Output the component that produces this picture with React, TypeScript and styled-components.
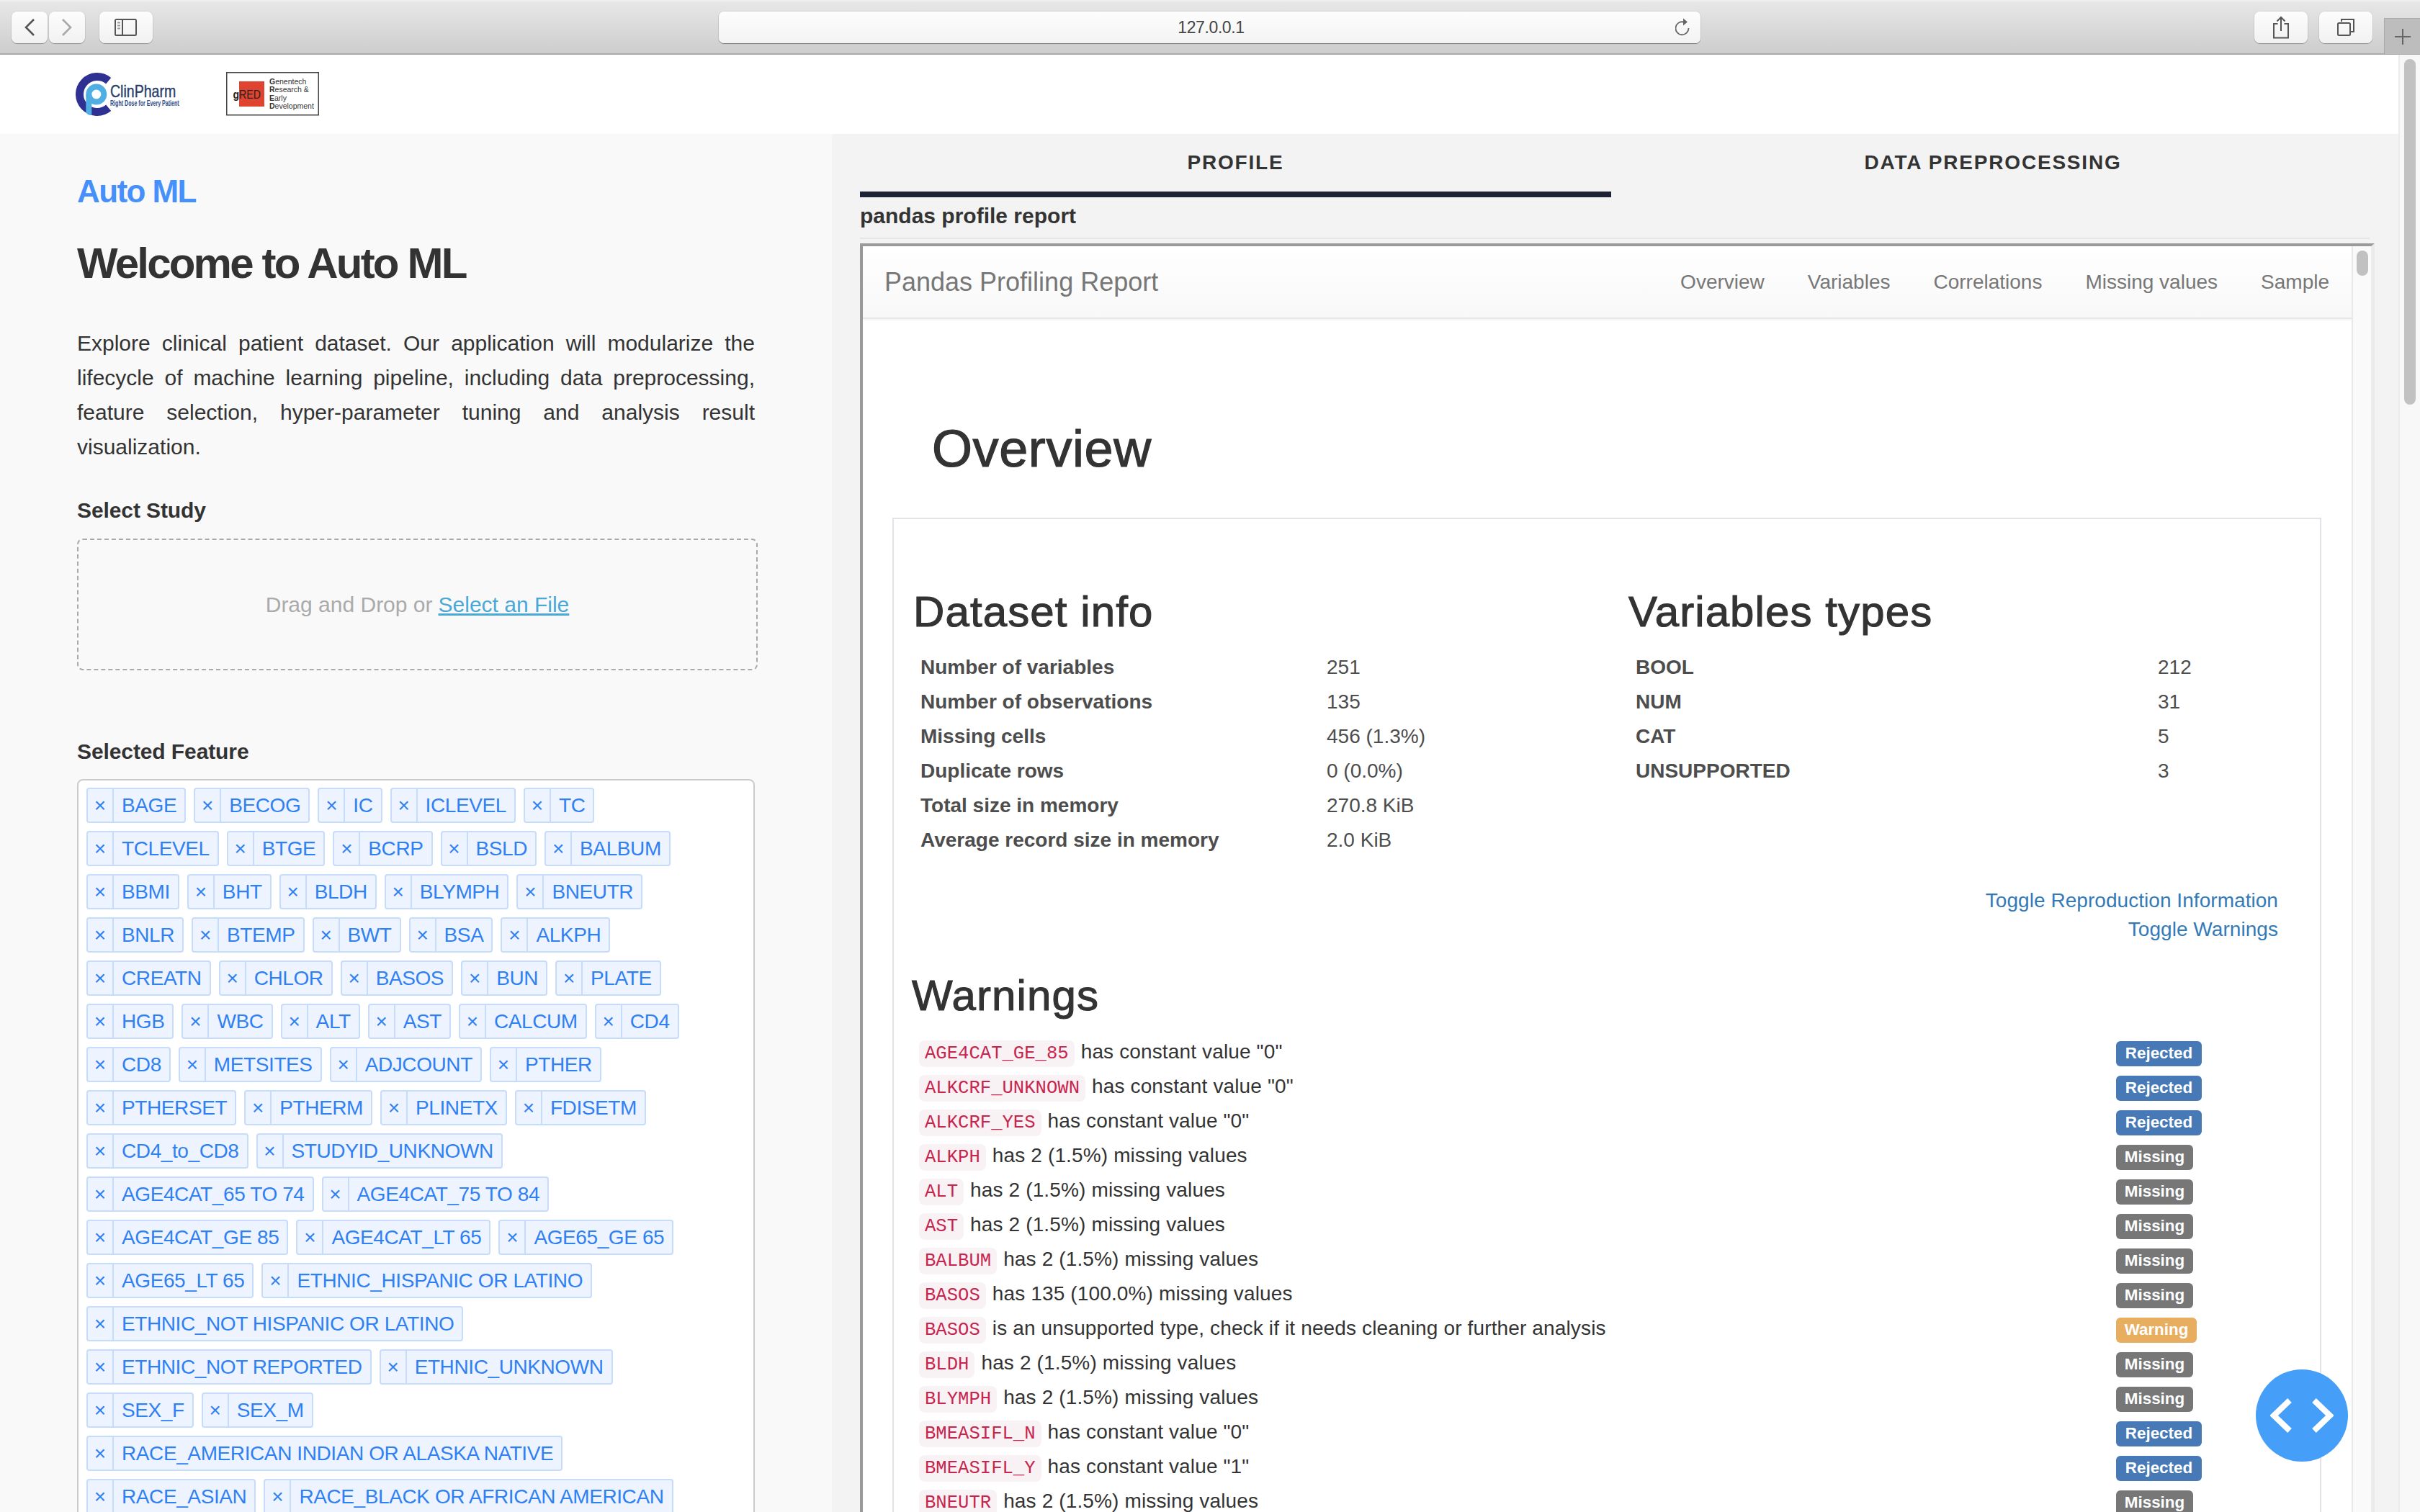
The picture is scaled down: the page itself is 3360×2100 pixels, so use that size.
import React from 'react';
import styled, { createGlobalStyle } from 'styled-components';

const GlobalStyle = createGlobalStyle`
  html, body {
    margin: 0;
    padding: 0;
    width: 3360px;
    height: 2100px;
    overflow: hidden;
    background: #fff;
    font-family: "Liberation Sans", Arial, sans-serif;
    color: #333;
  }
  * { box-sizing: border-box; }
`;

const Page = styled.div`
  position: relative;
  width: 3360px;
  height: 2100px;
  display: flex;
  flex-direction: column;
  overflow: hidden;
`;

/* browser chrome */
const Toolbar = styled.div`
  height: 76px;
  flex: none;
  display: flex;
  align-items: flex-start;
  padding: 14px 0 0 16px;
  background: linear-gradient(#e7e7e7, #cdcdcd);
  border-top: 2px solid #efefef;
  border-bottom: 2px solid #a9a9a9;
`;

const ChromeButton = styled.div<{ $w: number; $ml?: number }>`
  width: ${p => p.$w}px;
  height: 44px;
  flex: none;
  margin-left: ${p => p.$ml ?? 0}px;
  display: flex;
  align-items: center;
  justify-content: center;
  border-radius: 8px;
  background: linear-gradient(#fdfdfd, #f1f1f1);
  box-shadow: 0 1px 1px rgba(0, 0, 0, 0.28), 0 0 0 1px rgba(0, 0, 0, 0.05);
`;

const UrlBar = styled.div`
  width: 1363px;
  height: 44px;
  flex: none;
  margin-left: 786px;
  padding-left: 4px;
  position: relative;
  display: flex;
  align-items: center;
  justify-content: center;
  border-radius: 7px;
  font-size: 23px;
  letter-spacing: -0.4px;
  color: #444;
  background: linear-gradient(#fdfdfd, #f3f3f3);
  box-shadow: 0 1px 1px rgba(0, 0, 0, 0.4), 0 0 0 1px rgba(0, 0, 0, 0.05);
`;

const ReloadIcon = styled.svg`
  position: absolute;
  right: 11px;
  top: 8px;
`;

const NewTab = styled.div`
  width: 50px;
  height: 50px;
  flex: none;
  margin: 9px 0 0 16px;
  display: flex;
  align-items: center;
  justify-content: center;
  background: #bdbdbd;
  border-left: 1px solid #a9a9a9;
  border-top: 1px solid #a9a9a9;
`;

/* page */
const Viewport = styled.div`
  flex: 1;
  min-height: 0;
  display: flex;
`;

const Site = styled.div`
  width: 3330px;
  flex: none;
  display: flex;
  flex-direction: column;
`;

const PageScrollbar = styled.div`
  flex: 1;
  background: #f8f8f8;
  border-left: 2px solid #ececec;
  padding: 6px 6px 0 6px;
`;

const ScrollThumb = styled.div<{ $h: number }>`
  width: 16px;
  height: ${p => p.$h}px;
  border-radius: 8px;
  background: #c1c1c1;
`;

const Header = styled.div`
  height: 110px;
  flex: none;
  display: flex;
  align-items: flex-start;
  padding: 24px 0 0 105px;
  background: #fff;
  gap: 63px;
`;

const Panels = styled.div`
  flex: 1;
  min-height: 0;
  display: flex;
`;

const LeftPanel = styled.div`
  width: 1155px;
  flex: none;
  padding: 55px 107px 0 107px;
  background: #f9f9f9;
  overflow: hidden;
`;

const AppName = styled.div`
  font-size: 44px;
  line-height: 50px;
  font-weight: 700;
  letter-spacing: -1.6px;
  color: #4590fb;
`;

const Welcome = styled.h1`
  margin: 40px 0 0;
  font-size: 60px;
  line-height: 70px;
  font-weight: 700;
  letter-spacing: -2.8px;
  color: #333;
`;

const Intro = styled.p`
  margin: 52px 0 0;
  font-size: 30px;
  line-height: 48px;
  text-align: justify;
  color: #333;
`;

const FieldLabel = styled.div<{ $mt: number }>`
  margin-top: ${p => p.$mt}px;
  font-size: 30px;
  line-height: 40px;
  font-weight: 700;
  letter-spacing: -0.1px;
  color: #333;
`;

const DropZone = styled.div`
  margin: 19px -4px 0 0;
  height: 183px;
  display: flex;
  align-items: center;
  justify-content: center;
  border: 2px dashed #aaa;
  border-radius: 8px;
  font-size: 30px;
  color: #aaa;
`;

const FileLink = styled.a`
  margin-left: 8px;
  color: #4aa8d8;
  text-decoration: underline;
`;

const TagBox = styled.div`
  margin-top: 18px;
  height: 1100px;
  padding: 10px 10px 10px 11px;
  display: flex;
  flex-direction: column;
  gap: 11px;
  background: #fff;
  border: 2px solid #ccc;
  border-radius: 8px;
`;

const TagRow = styled.div`
  display: flex;
  gap: 11px;
`;

const Tag = styled.div`
  height: 49px;
  display: flex;
  background: #edf4ff;
  border: 2px solid #c6dcfb;
  border-radius: 4px;
  font-size: 28px;
  line-height: 45px;
  color: #2f80f2;
`;

const TagRemove = styled.span`
  width: 36px;
  text-align: center;
  border-right: 2px solid #c6dcfb;
`;

const TagLabel = styled.span`
  padding: 0 11px;
  letter-spacing: -0.4px;
  white-space: nowrap;
`;

const RightPanel = styled.div`
  flex: 1;
  min-width: 0;
  padding: 0 33px 0 39px;
  background: #f3f3f3;
  overflow: hidden;
`;

const Tabs = styled.div`
  display: flex;
  height: 88px;
`;

const TabItem = styled.div<{ $active?: boolean }>`
  flex: ${p => (p.$active ? '0 0 1043px' : '1')};
  height: 88px;
  text-align: center;
  padding-top: 19px;
  font-size: 28px;
  line-height: 42px;
  font-weight: 700;
  letter-spacing: 1.8px;
  color: #333;
  border-bottom: 8px solid ${p => (p.$active ? '#1e2235' : 'transparent')};
`;

const ReportTitle = styled.div`
  font-size: 30px;
  line-height: 52px;
  font-weight: 700;
  color: #333;
`;

const Rule = styled.div`
  height: 2px;
  margin: 4px 7px 0 0;
  background: #e6e6e6;
`;

const Frame = styled.div`
  margin-top: 6px;
  height: 1800px;
  display: flex;
  background: #fff;
  border-style: solid;
  border-width: 4px 5px 4px 4px;
  border-color: #9a9a9a #ebebeb #ebebeb #9a9a9a;
`;

const FrameBody = styled.div`
  width: 2067px;
  flex: none;
  display: flex;
  flex-direction: column;
`;

const FrameScrollbar = styled.div`
  flex: 1;
  background: #fafafa;
  border-left: 2px solid #e8e8e8;
  padding: 6px 0 0 5px;
`;

const NavBar = styled.div`
  height: 101px;
  flex: none;
  display: flex;
  align-items: center;
  padding: 0 1px 0 30px;
  background: linear-gradient(#fff, #f8f8f8);
  border-bottom: 2px solid #e7e7e7;
  box-shadow: 0 1px 4px rgba(0, 0, 0, 0.06);
  color: #777;
`;

const Brand = styled.div`
  font-size: 36px;
  margin-right: auto;
`;

const NavLink = styled.div`
  padding: 0 30px;
  font-size: 28px;
`;

const PageHeading = styled.h1`
  margin: 128px 0 0 96px;
  font-size: 72px;
  line-height: 104px;
  font-weight: 400;
  letter-spacing: 0.6px;
  -webkit-text-stroke: 1.2px #333;
  color: #333;
`;

const Well = styled.div`
  margin: 44px 0 0 41px;
  width: 1984px;
  height: 1400px;
  padding-top: 96px;
  border: 2px solid #e2e2e8;
  border-bottom: 0;
`;

const InfoColumns = styled.div`
  display: grid;
  grid-template-columns: 993px 1fr;
  padding-left: 27px;
`;

const SectionTitle = styled.h2<{ $ml?: number; $mt?: number }>`
  margin: ${p => p.$mt ?? 0}px 0 0 ${p => p.$ml ?? 0}px;
  font-size: 60px;
  line-height: 66px;
  font-weight: 400;
  letter-spacing: 1.1px;
  -webkit-text-stroke: 1.1px #333;
  color: #333;
`;

const InfoTable = styled.div<{ $label: number }>`
  margin: 20px 0 0 10px;
  display: grid;
  grid-template-columns: ${p => p.$label}px 1fr;
  grid-auto-rows: 48px;
  align-items: center;
  font-size: 28px;
  color: #4d4d4d;
`;

const InfoLabel = styled.div`
  font-weight: 700;
`;

const Toggles = styled.div`
  margin: 40px 58px 0 0;
  text-align: right;
  font-size: 28px;
  line-height: 40px;
  letter-spacing: 0.05px;
  color: #337ab7;
`;

const WarningList = styled.div`
  margin: 23px 0 0 35px;
`;

const WarningRow = styled.div`
  display: grid;
  grid-template-columns: 1662px auto;
  height: 48px;
  align-items: center;
  font-size: 28px;
  letter-spacing: 0.14px;
  color: #333;
`;

const Code = styled.code`
  display: inline-block;
  height: 37px;
  margin-right: 9px;
  padding: 0 8px;
  font-family: "Liberation Mono", monospace;
  font-size: 25.6px;
  line-height: 37px;
  letter-spacing: 0;
  color: #c7254e;
  background: #f9f2f4;
  border-radius: 8px;
`;

const badgeColors = {
  Rejected: { bg: '#4679b5', w: 119 },
  Missing: { bg: '#777777', w: 107 },
  Warning: { bg: '#e8ae60', w: 112 },
};

const Badge = styled.span<{ $kind: keyof typeof badgeColors }>`
  width: ${p => badgeColors[p.$kind].w}px;
  height: 35px;
  display: block;
  text-align: center;
  border-radius: 6px;
  background: ${p => badgeColors[p.$kind].bg};
  color: #fff;
  font-size: 22.4px;
  line-height: 34px;
  font-weight: 700;
  letter-spacing: 0;
`;

const Fab = styled.div`
  position: absolute;
  right: 100px;
  bottom: 70px;
  width: 128px;
  height: 128px;
  display: flex;
  align-items: center;
  justify-content: center;
  border-radius: 50%;
  background: #459ef8;
`;

const tagRows = [
  ['BAGE', 'BECOG', 'IC', 'ICLEVEL', 'TC'],
  ['TCLEVEL', 'BTGE', 'BCRP', 'BSLD', 'BALBUM'],
  ['BBMI', 'BHT', 'BLDH', 'BLYMPH', 'BNEUTR'],
  ['BNLR', 'BTEMP', 'BWT', 'BSA', 'ALKPH'],
  ['CREATN', 'CHLOR', 'BASOS', 'BUN', 'PLATE'],
  ['HGB', 'WBC', 'ALT', 'AST', 'CALCUM', 'CD4'],
  ['CD8', 'METSITES', 'ADJCOUNT', 'PTHER'],
  ['PTHERSET', 'PTHERM', 'PLINETX', 'FDISETM'],
  ['CD4_to_CD8', 'STUDYID_UNKNOWN'],
  ['AGE4CAT_65 TO 74', 'AGE4CAT_75 TO 84'],
  ['AGE4CAT_GE 85', 'AGE4CAT_LT 65', 'AGE65_GE 65'],
  ['AGE65_LT 65', 'ETHNIC_HISPANIC OR LATINO'],
  ['ETHNIC_NOT HISPANIC OR LATINO'],
  ['ETHNIC_NOT REPORTED', 'ETHNIC_UNKNOWN'],
  ['SEX_F', 'SEX_M'],
  ['RACE_AMERICAN INDIAN OR ALASKA NATIVE'],
  ['RACE_ASIAN', 'RACE_BLACK OR AFRICAN AMERICAN'],
];

const datasetInfo = [
  ['Number of variables', '251'],
  ['Number of observations', '135'],
  ['Missing cells', '456 (1.3%)'],
  ['Duplicate rows', '0 (0.0%)'],
  ['Total size in memory', '270.8 KiB'],
  ['Average record size in memory', '2.0 KiB'],
];

const variableTypes = [
  ['BOOL', '212'],
  ['NUM', '31'],
  ['CAT', '5'],
  ['UNSUPPORTED', '3'],
];

const missing2 = 'has 2 (1.5%) missing values';

const warnings: [string, string, keyof typeof badgeColors][] = [
  ['AGE4CAT_GE_85', 'has constant value "0"', 'Rejected'],
  ['ALKCRF_UNKNOWN', 'has constant value "0"', 'Rejected'],
  ['ALKCRF_YES', 'has constant value "0"', 'Rejected'],
  ['ALKPH', missing2, 'Missing'],
  ['ALT', missing2, 'Missing'],
  ['AST', missing2, 'Missing'],
  ['BALBUM', missing2, 'Missing'],
  ['BASOS', 'has 135 (100.0%) missing values', 'Missing'],
  ['BASOS', 'is an unsupported type, check if it needs cleaning or further analysis', 'Warning'],
  ['BLDH', missing2, 'Missing'],
  ['BLYMPH', missing2, 'Missing'],
  ['BMEASIFL_N', 'has constant value "0"', 'Rejected'],
  ['BMEASIFL_Y', 'has constant value "1"', 'Rejected'],
  ['BNEUTR', missing2, 'Missing'],
];

const logoFont = "'Liberation Sans', sans-serif";

const ClinPharmLogo = () => (
  <svg width="146" height="62" viewBox="0 0 146 62">
    <path d="M45.7 12.2A24.5 24.5 0 1 0 45.7 49.8" fill="none" stroke="#2e3192" strokeWidth="11" />
    <circle cx="28.8" cy="31" r="10.5" fill="#fff" stroke="#4fafe3" strokeWidth="8" />
    <path d="M14.3 31h8v29h-2.5q-3.5-1-5.5-3.5z" fill="#4fafe3" />
    <text transform="translate(48 35) scale(0.85 1)" fontFamily={logoFont} fontSize="23" fill="#2b4069" stroke="#2b4069" strokeWidth="0.4">ClinPharm</text>
    <text transform="translate(48 47) scale(0.71 1)" fontFamily={logoFont} fontSize="10" fontWeight="700" fill="#2e4d8a">Right Dose for Every Patient</text>
  </svg>
);

const GredLine = ({ y, first, rest }: { y: number; first: string; rest: string }) => (
  <text x="60" y={y} fontFamily={logoFont} fontSize="10.5" fill="#333">
    <tspan fontWeight="700">{first}</tspan>{rest}
  </text>
);

const GredLogo = () => (
  <svg width="129" height="61" viewBox="0 0 129 61">
    <rect x="0.75" y="0.75" width="127.5" height="59" fill="#fff" stroke="#444" strokeWidth="1.5" />
    <rect x="18" y="13" width="35" height="35" fill="#de4430" />
    <text transform="translate(9.5 37) scale(0.83 1)" fontFamily={logoFont} fontSize="17" fill="#222"><tspan fontWeight="700">g</tspan>RED</text>
    <GredLine y={17} first="G" rest="enentech" />
    <GredLine y={28} first="R" rest="esearch &" />
    <GredLine y={40} first="E" rest="arly" />
    <GredLine y={51} first="D" rest="evelopment" />
  </svg>
);

export default function App() {
  return (
    <Page>
      <GlobalStyle />
      <Toolbar>
        <ChromeButton $w={50}>
          <svg width="20" height="26" viewBox="0 0 20 26"><path d="M16 2 5 13l11 11" fill="none" stroke="#555" strokeWidth="2.6" /></svg>
        </ChromeButton>
        <ChromeButton $w={50} $ml={2}>
          <svg width="20" height="26" viewBox="0 0 20 26"><path d="m4 2 11 11L4 24" fill="none" stroke="#a8a8a8" strokeWidth="2.6" /></svg>
        </ChromeButton>
        <ChromeButton $w={74} $ml={20}>
          <svg width="32" height="24" viewBox="0 0 32 24">
            <rect x="1" y="1" width="29" height="22" rx="1.5" fill="none" stroke="#555" strokeWidth="2" />
            <path d="M11 1v22" stroke="#555" strokeWidth="2" />
            <path d="M4 5.5h4M4 9.5h4M4 13.5h4" stroke="#999" strokeWidth="2" />
          </svg>
        </ChromeButton>
        <UrlBar>
          127.0.0.1
          <ReloadIcon width="24" height="28" viewBox="0 0 24 28">
            <path d="M13.5 6.5A9 9 0 1 0 20.5 15" fill="none" stroke="#666" strokeWidth="1.8" transform="translate(-2 0)" />
            <path d="M11 1.5l6 5-6 5z" fill="#666" />
          </ReloadIcon>
        </UrlBar>
        <ChromeButton $w={74} $ml={769}>
          <svg width="24" height="32" viewBox="0 0 24 32">
            <path d="M7.5 11H2v19.5h20V11h-5.5" fill="none" stroke="#555" strokeWidth="2" />
            <path d="M12 21V2M6.5 7.5 12 2l5.5 5.5" fill="none" stroke="#555" strokeWidth="2" />
          </svg>
        </ChromeButton>
        <ChromeButton $w={74} $ml={16}>
          <svg width="26" height="26" viewBox="0 0 26 26">
            <path d="M7 5V2h17v17h-4" fill="none" stroke="#555" strokeWidth="2" />
            <rect x="2" y="7" width="17" height="17" rx="1.5" fill="none" stroke="#555" strokeWidth="2" />
          </svg>
        </ChromeButton>
        <NewTab>
          <svg width="24" height="24" viewBox="0 0 24 24"><path d="M12 1v22M1 12h22" stroke="#666" strokeWidth="2" /></svg>
        </NewTab>
      </Toolbar>
      <Viewport>
        <Site>
          <Header>
            <ClinPharmLogo />
            <GredLogo />
          </Header>
          <Panels>
            <LeftPanel>
              <AppName>Auto ML</AppName>
              <Welcome>Welcome to Auto ML</Welcome>
              <Intro>
                Explore clinical patient dataset. Our application will modularize the lifecycle of machine learning
                pipeline, including data preprocessing, feature selection, hyper-parameter tuning and analysis result
                visualization.
              </Intro>
              <FieldLabel $mt={44}>Select Study</FieldLabel>
              <DropZone>
                Drag and Drop or<FileLink>Select an File</FileLink>
              </DropZone>
              <FieldLabel $mt={93}>Selected Feature</FieldLabel>
              <TagBox>
                {tagRows.map(row => (
                  <TagRow key={row[0]}>
                    {row.map(name => (
                      <Tag key={name}>
                        <TagRemove>×</TagRemove>
                        <TagLabel>{name}</TagLabel>
                      </Tag>
                    ))}
                  </TagRow>
                ))}
              </TagBox>
            </LeftPanel>
            <RightPanel>
              <Tabs>
                <TabItem $active>PROFILE</TabItem>
                <TabItem>DATA PREPROCESSING</TabItem>
              </Tabs>
              <ReportTitle>pandas profile report</ReportTitle>
              <Rule />
              <Frame>
                <FrameBody>
                  <NavBar>
                    <Brand>Pandas Profiling Report</Brand>
                    {['Overview', 'Variables', 'Correlations', 'Missing values', 'Sample'].map(link => (
                      <NavLink key={link}>{link}</NavLink>
                    ))}
                  </NavBar>
                  <PageHeading>Overview</PageHeading>
                  <Well>
                    <InfoColumns>
                      <div>
                        <SectionTitle>Dataset info</SectionTitle>
                        <InfoTable $label={564}>
                          {datasetInfo.map(([label, value]) => (
                            <React.Fragment key={label}>
                              <InfoLabel>{label}</InfoLabel>
                              <div>{value}</div>
                            </React.Fragment>
                          ))}
                        </InfoTable>
                      </div>
                      <div>
                        <SectionTitle>Variables types</SectionTitle>
                        <InfoTable $label={725}>
                          {variableTypes.map(([label, value]) => (
                            <React.Fragment key={label}>
                              <InfoLabel>{label}</InfoLabel>
                              <div>{value}</div>
                            </React.Fragment>
                          ))}
                        </InfoTable>
                      </div>
                    </InfoColumns>
                    <Toggles>
                      <div>Toggle Reproduction Information</div>
                      <div>Toggle Warnings</div>
                    </Toggles>
                    <SectionTitle $ml={25} $mt={39}>Warnings</SectionTitle>
                    <WarningList>
                      {warnings.map(([field, text, kind], i) => (
                        <WarningRow key={i}>
                          <div><Code>{field}</Code>{text}</div>
                          <Badge $kind={kind}>{kind}</Badge>
                        </WarningRow>
                      ))}
                    </WarningList>
                  </Well>
                </FrameBody>
                <FrameScrollbar>
                  <ScrollThumb $h={35} />
                </FrameScrollbar>
              </Frame>
            </RightPanel>
          </Panels>
        </Site>
        <PageScrollbar>
          <ScrollThumb $h={480} />
        </PageScrollbar>
      </Viewport>
      <Fab>
        <svg width="88" height="48" viewBox="0 0 88 48">
          <path d="M27 3 5 24l22 21M61 3l22 21-22 21" fill="none" stroke="#fff" strokeWidth="8" />
        </svg>
      </Fab>
    </Page>
  );
}
